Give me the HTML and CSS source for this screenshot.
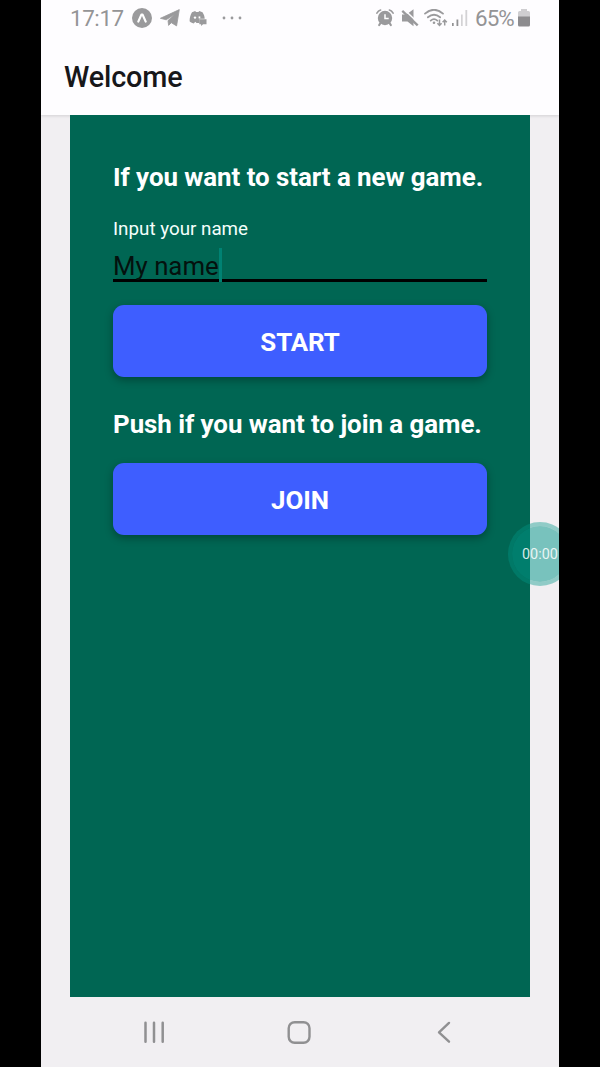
FILE: index.html
```html
<!DOCTYPE html>
<html lang="en">
<head>
<meta charset="utf-8">
<title>Welcome</title>
<link rel="stylesheet" href="styles.css">
</head>
<body>
<div class="phone">
  <header class="header">
    <div class="status">
      <span class="clock">17:17</span>
      <svg class="icon expo" width="20" height="20" viewBox="0 0 20 20"><circle cx="10" cy="10" r="10" fill="#9a9a9c"/><path d="M6.3 13.6 9.4 6.6h1.2L13.7 13.6" fill="none" stroke="#fff" stroke-width="2.2" stroke-linecap="round" stroke-linejoin="round"/></svg>
      <svg class="icon telegram" width="20" height="18" viewBox="0 0 20 18"><path d="M.4 9.3 19.3.6 16.6 16.9 11.3 13.7 8.6 16.4 8 11.6 14.5 5.4 6.2 10.8Z" fill="#9a9a9c" stroke="#9a9a9c" stroke-width=".8" stroke-linejoin="round"/></svg>
      <svg class="icon discord" width="18" height="16" viewBox="0 0 18 16"><path d="M3 2.2 6.2 1 7 2h2.4L10.3 1 13.5 2.2C15 4.5 15.7 6.6 15.7 8.8H10.4V13H7.5L6.3 11.7 4.7 13.5C2.8 13 1.4 12.4.6 11.3.6 7.8 1.4 4.8 3 2.2Z" fill="#9a9a9c"/><circle cx="6" cy="7.6" r="1.2" fill="#fff"/><path d="M9.6 6.4h1.7v2h-1.7z" fill="#fff"/><path d="M10.3 9.3h7.2v5h-3.4l-2 1.6v-1.6h-1.8z" fill="#9a9a9c"/></svg>
      <svg class="icon dots" width="20" height="4" viewBox="0 0 20 4" fill="#9a9a9c"><circle cx="2" cy="2" r="1.4"/><circle cx="10" cy="2" r="1.4"/><circle cx="18" cy="2" r="1.4"/></svg>
      <svg class="icon alarm" width="18" height="18" viewBox="0 0 18 18"><g fill="none" stroke="#9a9a9c" stroke-linecap="round"><circle cx="9" cy="9" r="6" stroke-width="2.4"/><path d="M.9 4.2Q2.2 1.7 4.6 1M17.1 4.2Q15.8 1.7 13.4 1" stroke-width="1.6"/><path d="m4.5 14-1.3 2M13.5 14l1.3 2" stroke-width="2.2"/></g><circle cx="9" cy="9" r="5.5" fill="#9a9a9c"/><path d="M9 5.3V9.5h3.7" fill="none" stroke="#fff" stroke-width="1.5"/></svg>
      <svg class="icon mute" width="18" height="18" viewBox="0 0 18 18"><path d="M1 5.5h4.5L12.5.3v16.9L6.5 12.5H1Z" fill="#9a9a9c"/><path d="M3.2.5 18 14.8" stroke="#fefdff" stroke-width="1.5"/><path d="M1.3 1.8 16.7 16.3" stroke="#9a9a9c" stroke-width="2.3"/></svg>
      <svg class="icon wifi" width="24" height="18" viewBox="0 0 24 18" fill="none" stroke="#9a9a9c"><path d="M1 4.6Q10-3.1 19 4.6M3.9 8.3Q10 3.1 16.1 8.3M6.7 11.6Q10 8.7 13.3 11.6" stroke-width="1.8" stroke-linecap="round"/><circle cx="10" cy="13.8" r="1.3" fill="#9a9a9c" stroke="none"/><path d="M15.5 10.5V16.3M13.4 14.3 15.5 16.5 17.6 14.3M20.7 16.5V11.2M18.6 13.3 20.7 11 22.8 13.3" stroke-width="1.5"/></svg>
      <svg class="icon signal" width="16" height="18" viewBox="0 0 16 18"><path d="M0 14h1.7v3H0zM4.5 10.5h1.8V17H4.5z" fill="#929294"/><path d="M9 5.5h1.7V17H9zM13.4 1h1.8v16h-1.8z" fill="#d3d2d5"/></svg>
      <span class="percent">65%</span>
      <svg class="icon battery" width="12" height="18" viewBox="0 0 12 18"><path d="M3 0h6v2h1.5Q12 2 12 3.5V8H0V3.5Q0 2 1.5 2H3Z" fill="#cfced1"/><path d="M0 7.5h12V16q0 1.5-1.5 1.5h-9Q0 17.5 0 16Z" fill="#8d8c8f"/></svg>
    </div>
    <h1 class="title">Welcome</h1>
  </header>

  <main class="panel">
    <h2 class="heading">If you want to start a new game.</h2>
    <label class="label">Input your name</label>
    <div class="field"><span class="value">My name</span><span class="caret"></span></div>
    <button class="button">START</button>
    <h2 class="heading join">Push if you want to join a game.</h2>
    <button class="button">JOIN</button>
  </main>

  <nav class="nav">
    <svg width="22" height="24" viewBox="0 0 22 24" stroke="#909092" stroke-width="2.5" stroke-linecap="round"><path d="M2.5 2.7v19M11 2.7v19M19.7 2.7v19"/></svg>
    <svg width="24" height="24" viewBox="0 0 24 24"><rect x="1.7" y="2.2" width="20.8" height="20.6" rx="6" fill="none" stroke="#909092" stroke-width="2.4"/></svg>
    <svg width="14" height="24" viewBox="0 0 14 24" fill="none" stroke="#909092" stroke-width="2.4" stroke-linecap="round" stroke-linejoin="round"><path d="M12 2.9 2 12.3 12 21.7"/></svg>
  </nav>

  <div class="timer"><span>00:00</span></div>
</div>
</body>
</html>
```

FILE: styles.css
```css
* { box-sizing: border-box; }
body {
  margin: 0;
  background: #000;
  font-family: Roboto, "Liberation Sans", sans-serif;
}
.phone {
  position: relative;
  width: 518px;
  height: 1067px;
  margin: 0 auto;
  background: #f1eff2;
  overflow: hidden;
  display: flex;
  flex-direction: column;
}
.header {
  height: 115px;
  background: #fefdff;
  box-shadow: 0 1px 3px rgba(0, 0, 0, 0.13);
}
.status {
  display: flex;
  align-items: center;
  height: 36px;
  padding-left: 29px;
  color: #949496;
}
.icon { flex: none; display: block; }
.clock, .percent { font-size: 22.4px; line-height: 37px; flex: none; }
.clock { width: 62px; letter-spacing: -0.4px; }
.percent { width: 43px; letter-spacing: -0.9px; }
.telegram { margin-left: 8px; }
.discord { margin-left: 9px; }
.dots { margin-left: 15px; }
.alarm { margin-left: 134px; }
.mute { margin-left: 7px; }
.wifi { margin-left: 5px; }
.signal { margin-left: 4px; margin-right: 7px; }
.title {
  margin: 23px 0 0 23px;
  font-size: 28.8px;
  font-weight: 500;
  letter-spacing: -0.15px;
  line-height: 36px;
  color: #17171a;
}
.panel {
  width: 460px;
  height: 882px;
  margin-left: 29px;
  padding: 47px 43px 0;
  background: #006653;
  display: flex;
  flex-direction: column;
}
.heading {
  margin: 0;
  font-size: 25.9px;
  font-weight: 700;
  letter-spacing: -0.05px;
  line-height: 31px;
  color: #fff;
  white-space: nowrap;
}
.label {
  margin-top: 24px;
  font-size: 18.8px;
  line-height: 24px;
  color: #f4fffb;
}
.field {
  display: flex;
  height: 41px;
  border-bottom: 3px solid #000;
  padding-top: 10px;
}
.value { font-size: 25.8px; line-height: 30px; color: #04110e; }
.caret {
  width: 3px;
  height: 34px;
  margin-top: -3px;
  background: #008273;
}
.button {
  height: 72px;
  margin: 23px 0 0;
  padding: 2px 0 0;
  border: 0;
  border-radius: 11px;
  background: #3e5eff;
  box-shadow: 0 3px 8px rgba(0, 0, 0, 0.32);
  font: 700 25.9px/32px Roboto, "Liberation Sans", sans-serif;
  letter-spacing: -0.1px;
  color: #fff;
}
.join { margin-top: 32px; }
.join + .button { margin-top: 23px; }
.nav {
  display: flex;
  height: 70px;
  padding: 23px 0 0 102px;
}
.nav svg + svg { margin-left: 122px; }
.nav svg:last-child { margin-left: 126px; }
.timer {
  position: absolute;
  left: 467px;
  top: 522px;
  width: 64px;
  height: 64px;
  border-radius: 50%;
  border: 4px solid rgba(0, 150, 136, 0.4);
  background: rgba(0, 150, 136, 0.5);
  background-clip: padding-box;
  display: flex;
  align-items: center;
  padding-left: 10px;
  font-size: 14.4px;
  color: rgba(255, 255, 255, 0.85);
}
```
